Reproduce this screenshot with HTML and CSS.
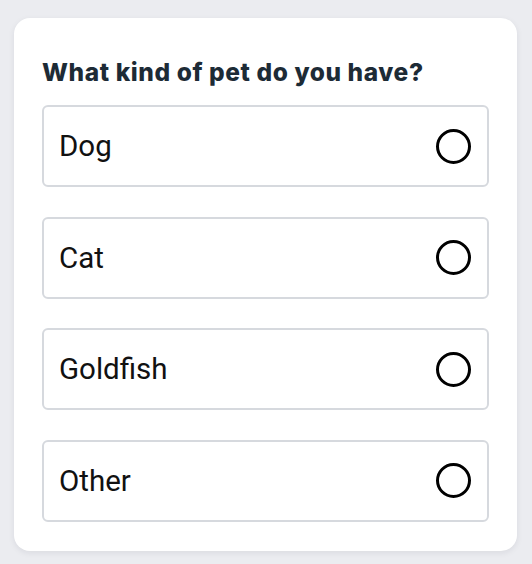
FILE: index.html
```html
<!DOCTYPE html>
<html>
<head>
<meta charset="utf-8">
<link rel="stylesheet" href="styles.css">
</head>
<body>
<div class="card">
  <h2 class="title">What kind of pet do you have?</h2>
  <div class="options">
    <label class="option"><span class="label">Dog</span><span class="radio"></span></label>
    <label class="option"><span class="label">Cat</span><span class="radio"></span></label>
    <label class="option"><span class="label">Goldfish</span><span class="radio"></span></label>
    <label class="option"><span class="label">Other</span><span class="radio"></span></label>
  </div>
</div>
</body>
</html>
```
FILE: styles.css
```css
html, body {
  margin: 0;
  padding: 0;
}
body {
  background: #ebecf0;
  padding: 18px 0 0 14px;
  width: 532px;
  height: 564px;
  box-sizing: border-box;
}
.card {
  width: 503px;
  box-sizing: border-box;
  background: #fff;
  border-radius: 16px;
  box-shadow: 0 2px 6px rgba(20, 30, 50, 0.08);
  padding: 40px 28px 29px 28px;
}
.title {
  margin: 0 0 18px 0;
  font-family: Inter, "Noto Sans", sans-serif;
  font-weight: 800;
  font-size: 24.5px;
  line-height: 29px;
  color: #1d2b36;
  letter-spacing: 0.6px;
}
.options {
  display: flex;
  flex-direction: column;
  gap: 29.5px;
}
.option {
  display: flex;
  align-items: center;
  justify-content: space-between;
  height: 82px;
  box-sizing: border-box;
  border: 2px solid #d6d9de;
  border-radius: 6px;
  padding: 0 16px 0 15px;
}
.label {
  font-family: Roboto, "Liberation Sans", sans-serif;
  font-size: 29.5px;
  color: #111;
}
.radio {
  width: 35px;
  height: 35px;
  box-sizing: border-box;
  border: 3px solid #000;
  border-radius: 50%;
}
```
